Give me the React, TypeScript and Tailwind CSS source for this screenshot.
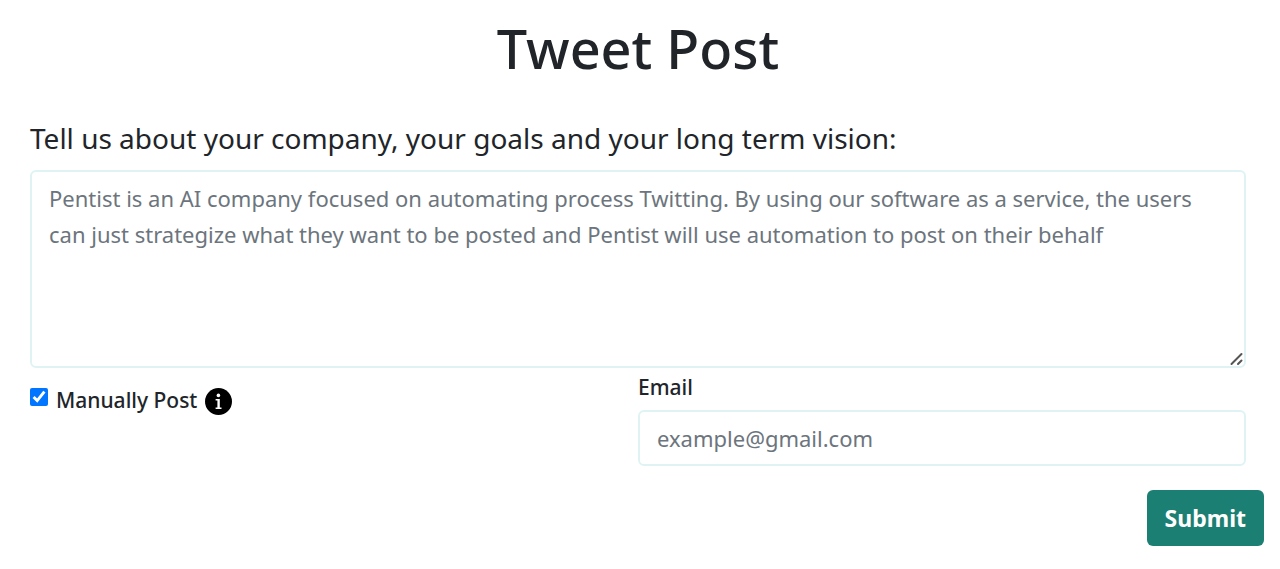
import { useState } from 'react'

const PLACEHOLDER =
  'Pentist is an AI company focused on automating process Twitting. By using our software as a service, the users can just strategize what they want to be posted and Pentist will use automation to post on their behalf'

function InfoIcon() {
  return (
    <svg viewBox="0 0 28 28" className="w-7 h-7" aria-hidden="true">
      <circle cx="13.5" cy="13.5" r="13.5" fill="#000" />
      <circle cx="13.4" cy="7.4" r="1.8" fill="#fff" />
      <path d="M10.6 11h4.2v8.6h1.7v1.5h-5.9v-1.5h1.8v-7.1h-1.8z" fill="#fff" />
    </svg>
  )
}

function ResizeGrip() {
  return (
    <svg
      viewBox="0 0 14 14"
      className="pointer-events-none absolute right-0.5 bottom-0.5 w-3.5 h-3.5"
      aria-hidden="true"
    >
      <path d="M1.5 12l10-10M8 12l3.5-3.5" stroke="#555" strokeWidth="2" strokeLinecap="round" />
    </svg>
  )
}

export default function App() {
  const [vision, setVision] = useState('')
  const [email, setEmail] = useState('')
  const [manual, setManual] = useState(true)

  return (
    <main className="min-h-screen bg-white px-4 pt-3 pb-6 font-['Noto_Sans','Open_Sans',sans-serif] text-[#212529]">
      <h1 className="pr-1 text-center text-[54px] leading-[72px] font-medium">Tweet Post</h1>

      <form onSubmit={(e) => e.preventDefault()} className="mt-9">
        <div className="pl-3.5 pr-[18px]">
          <label htmlFor="vision" className="block text-[28px] leading-9">
            Tell us about your company, your goals and your long term vision:
          </label>
          <div className="relative mt-3.5">
            <textarea
              id="vision"
              value={vision}
              onChange={(e) => setVision(e.target.value)}
              placeholder={PLACEHOLDER}
              className="block w-full h-[198px] resize-none rounded-md border-2 border-[#dff3f4] bg-white pl-[17px] pr-4 py-2 text-[22px] leading-9 placeholder:text-[#6c757d] focus:outline-none"
            />
            <ResizeGrip />
          </div>

          <div className="mt-1 grid grid-cols-2">
            <div className="flex items-start gap-2 pt-4">
              <input
                id="manual"
                type="checkbox"
                checked={manual}
                onChange={(e) => setManual(e.target.checked)}
                className="h-[18px] w-[18px] accent-[#0075ff]"
              />
              <label htmlFor="manual" className="text-[21px] leading-6 font-medium">
                Manually Post
              </label>
              <InfoIcon />
            </div>
            <div>
              <label htmlFor="email" className="block text-[21px] leading-[30px] font-medium">
                Email
              </label>
              <input
                id="email"
                type="email"
                value={email}
                onChange={(e) => setEmail(e.target.value)}
                placeholder="example@gmail.com"
                className="mt-2 block w-full h-14 rounded-md border-2 border-[#dff3f4] bg-white px-[17px] text-[22px] placeholder:text-[#6c757d] focus:outline-none"
              />
            </div>
          </div>
        </div>

        <div className="mt-6 flex justify-end">
          <button
            type="submit"
            className="h-14 rounded-md bg-[#1c7f73] px-[18px] text-[23px] font-bold text-white cursor-pointer"
          >
            Submit
          </button>
        </div>
      </form>
    </main>
  )
}
